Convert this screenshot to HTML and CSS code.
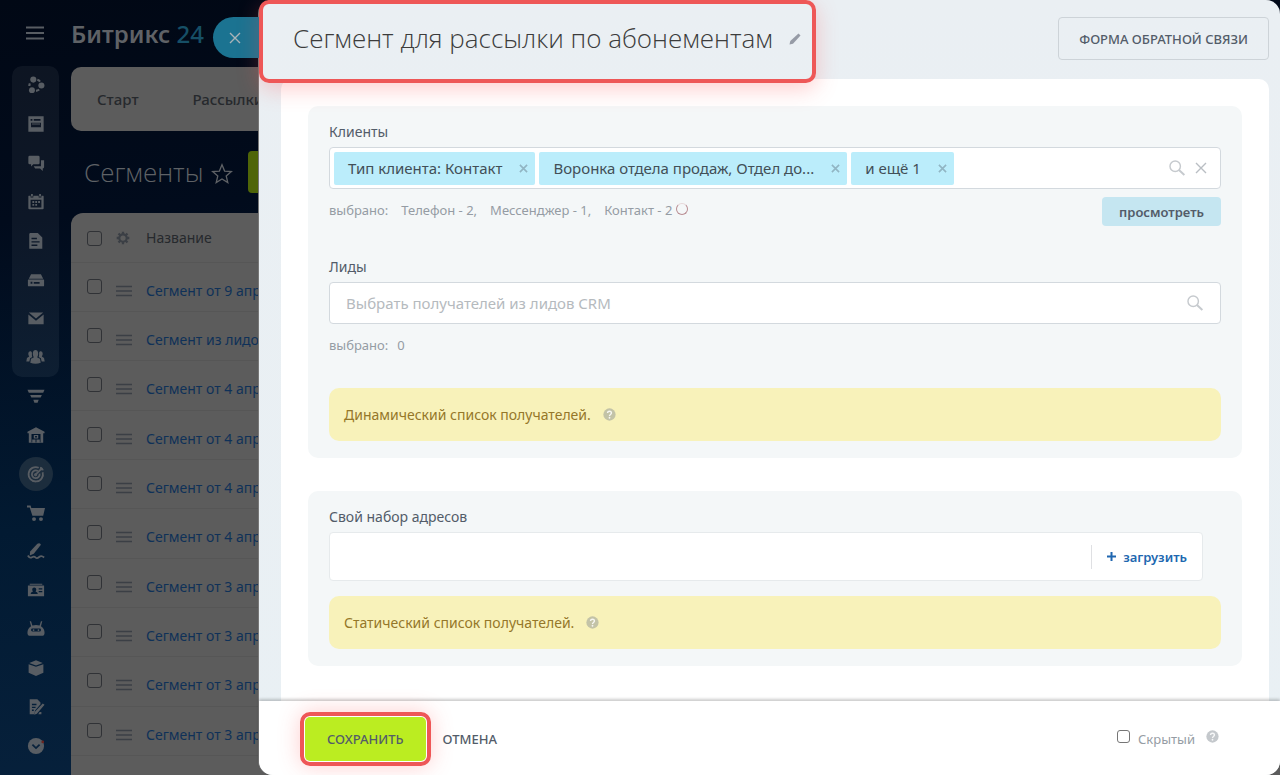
FILE: index.html
```html
<!DOCTYPE html>
<html lang="ru">
<head>
<meta charset="utf-8">
<meta name="viewport" content="width=device-width, initial-scale=1">
<title>Сегмент для рассылки по абонементам</title>
<link rel="stylesheet" href="styles.css">
</head>
<body>
<svg class="sprite" aria-hidden="true">
  <symbol id="search" viewBox="0 0 20 20"><circle cx="8" cy="8" r="5.8" fill="none" stroke="currentColor" stroke-width="1.6"/><path d="M12.2 12.2l6 5.600" stroke="currentColor" stroke-width="2.2"/></symbol>
  <symbol id="cross" viewBox="0 0 12 12"><path d="M1 1l10 10M11 1L1 11" stroke="currentColor" stroke-width="1.4" fill="none"/></symbol>
  <symbol id="small-cross" viewBox="0 0 10 10"><path d="M1 1l8 8M9 1L1 9" stroke="currentColor" stroke-width="1.8" fill="none"/></symbol>
  <symbol id="help" viewBox="0 0 14 14"><circle cx="7" cy="7" r="6.6" fill="currentColor"/><path d="M4.9 5.5c0-2.6 4.2-2.6 4.2 0 0 1.500-2.100 1.500-2.100 3" fill="none" stroke="#fff" stroke-opacity=".85" stroke-width="1.5"/><circle cx="7" cy="10.500" r=".95" fill="#fff" fill-opacity=".85"/></symbol>
  <symbol id="drag" viewBox="0 0 16 12"><path d="M0 1.500h16M0 6h16M0 10.500h16" stroke="currentColor" stroke-width="1.6"/></symbol>
</svg>

<div class="portal">
  <aside class="sidebar">
    <button class="menu-button" aria-label="Меню"><svg width="18" height="14" viewBox="0 0 18 14"><path d="M0 1.500h18M0 7h18M0 12.500h18" stroke="currentColor" stroke-width="2"/></svg></button>
    <nav class="side-nav">
      <div class="side-group">
        <a href="#" aria-label="Группы"><svg viewBox="0 0 20 20"><circle cx="7" cy="4" r="3.400"/><circle cx="16" cy="10.500" r="3.400"/><circle cx="5.500" cy="15.700" r="3.300"/><path d="M11.500 4.200a6.500 6.500 0 0 1 3 2M10 16.500a6.500 6.500 0 0 0 3.500-1.500M3.200 8.200a7 7 0 0 0-.6 2.800" fill="none" stroke="currentColor" stroke-width="2.400"/></svg></a>
        <a href="#" aria-label="Лента"><svg viewBox="0 0 20 20"><path fill-rule="evenodd" d="M1.500 1.500h17v17h-17zM4 4.500v2h2v-2zm3.500 0v2H15v-2zM4.500 8.500v5h11v-5z"/><path d="M5.500 9.500h9v1h-9z"/></svg></a>
        <a href="#" aria-label="Чат"><svg viewBox="0 0 20 20"><path d="M3 2h9.500q1.500 0 1.500 1.500V10q0 1.500-1.500 1.500H7L4.500 14v-2.500H3Q1.500 11.500 1.500 10V3.500Q1.500 2 3 2zM15.500 7H19v7.500q0 1.500-1.500 1.500v3L14.500 16H9l-1.500-2.500h8z"/></svg></a>
        <a href="#" aria-label="Календарь"><svg viewBox="0 0 20 20"><path fill-rule="evenodd" d="M2 3h2v2h3V3h6v2h3V3h2q.5 0 .5 1v13q0 1-1 1h-15q-1 0-1-1V4q0-1 .5-1zM4 7.500V16h12V7.500z"/><path d="M4.500 1h2v3h-2zm9 0h2v3h-2zM6 9h2v2H6zm3.200 0h2v2h-2zm3.200 0h2v2h-2zM6 12.300h2v2H6zm3.200 0h2v2h-2z"/></svg></a>
        <a href="#" aria-label="Документы"><svg viewBox="0 0 20 20"><path fill-rule="evenodd" d="M3.500 1H12l5 5v12.500H2.500V2zM5 6.500V8h6V6.500zm0 3.700v1.600h9v-1.600zm0 3.700v1.600h6.500v-1.600z"/></svg></a>
        <a href="#" aria-label="Диск"><svg viewBox="0 0 20 20"><path fill-rule="evenodd" d="M4.500 3.500h11L18 8.500H2zM1.500 9.500h17q.5 0 .5.500v6q0 1-1 1H2q-1 0-1-1v-6zM4 12v2.300h2V12zm3.500.2v2H14v-2z"/></svg></a>
        <a href="#" aria-label="Почта"><svg viewBox="0 0 20 20"><path d="M2 4h16l-8 6.500zM1.500 6l8.500 7 8.500-7v11h-17z"/></svg></a>
        <a href="#" aria-label="Сотрудники"><svg class="wide" viewBox="0 0 22 20"><path d="M8 6c0-5 6-5 6 0 0 2.500-1 3.500-1 4.500l3 1.500.8 4.500q-5.800 2-11.600 0L6 12l3-1.500C9 9.500 8 8.500 8 6zM3 6.500c0-3.500 4-3.500 4-1 0 3 0 3.500.5 4.500L5 11.500 4.200 15H.8l.7-4L4 9.500C3.500 8.500 3 8 3 6.500zM19 6.500c0-3.500-4-3.500-4-1 0 3 0 3.500-.5 4.500l2.500 1.500.8 3.500h3.400l-.7-4L18 9.500c.5-1 1-1.500 1-3z"/></svg></a>
      </div>
      <div class="side-rest">
        <a href="#" aria-label="CRM"><svg viewBox="0 0 20 20"><path d="M.5 3h19L18 6.300H2zM3.500 9h13l-1.300 2.800H4.800zM7 14.300h6l-1.200 3.200H8.200z"/></svg></a>
        <a href="#" aria-label="Склад"><svg viewBox="0 0 20 20"><path fill-rule="evenodd" d="M10 1.500l9.500 5V8H18v10.500H2V8H.5V6.500zM5 9v9h10V9z"/><path fill-rule="evenodd" d="M7.500 10h5v4h-5zm1.500 1.200v1.500h2v-1.500zM5.800 15h3.700v3.500H5.800zm4.700 0h3.700v3.500h-3.700z"/></svg></a>
        <a href="#" class="current" aria-label="Маркетинг"><svg viewBox="0 0 20 20" fill="none" stroke="currentColor"><path d="M13 3a8 8 0 1 0 4.400 5M12 6.700a4.300 4.300 0 1 0 2 3" stroke-width="2"/><path d="M9.500 10.800l7-7" stroke-width="2"/><path d="M14.500 5.500V2.500L17 .8l.5 2.200 2.200.5L18 6z" fill="currentColor" stroke="none"/><circle cx="9.500" cy="10.800" r="1.300" fill="currentColor"/></svg></a>
        <a href="#" aria-label="Магазин"><svg viewBox="0 0 20 20"><path d="M0 1.800h4L4.800 4.500H20L18 13H6L3 3.800H0z"/><circle cx="7.800" cy="16.800" r="2.200"/><circle cx="15.500" cy="16.800" r="2.200"/></svg></a>
        <a href="#" aria-label="Подпись"><svg viewBox="0 0 20 20"><path d="M11.500 2q2.500-1.500 4 1L7.500 13 3 15l.5-4.500z"/><path d="M1 15q2 3.500 4.500 2t4 .2 4-.5 5.500.5" fill="none" stroke="currentColor" stroke-width="2"/></svg></a>
        <a href="#" aria-label="Контакты"><svg viewBox="0 0 20 20"><path fill-rule="evenodd" d="M3 3h14v1.200H3zM1 5h18v12H1zM4 14.500h8q0-2-2.500-2.800.8-1 .8-2.200c0-3-4.500-3-4.500 0q0 1.200.8 2.200Q4 12.500 4 14.500zM13 8v1.500h4V8zm0 3v1.500h4V11z"/></svg></a>
        <a href="#" aria-label="Роботы"><svg viewBox="0 0 20 20"><path fill-rule="evenodd" d="M3 1.500h1.500L6 6.200q4-1.400 8 0l1.500-4.700H17L15.500 7Q19.500 9.500 19.500 14q0 3.500-2 3.500h-15q-2 0-2-3.500 0-4.500 4-7zM6 9.500q-1.500 0-1.500 1.500T6 12.800h8q1.500 0 1.500-1.800T14 9.500z"/><circle cx="7.300" cy="11.200" r="1"/><circle cx="12.700" cy="11.200" r="1"/></svg></a>
        <a href="#" aria-label="Маркет"><svg viewBox="0 0 20 20"><path d="M10 1.500l7.500 3L10 7.200 2.500 4.500zM1.800 5.800L10 8.700l8.200-2.900v9.500L10 18.800l-8.200-3.500z"/></svg></a>
        <a href="#" aria-label="Договоры"><svg viewBox="0 0 20 20"><path fill-rule="evenodd" d="M3 1.500h8.500L15 5v2l-6 7-.8 4H3zM5.500 6.500V8h5V6.500zm0 3.200v1.500h4V9.700zm0 3.200v1.500h2v-1.500z"/><path d="M17.500 6l2 1.500-8.500 10-3 1 .8-3.200zM14 15.500h2V18h-3.500z"/></svg></a>
        <a href="#" aria-label="Ещё"><svg viewBox="0 0 20 20"><circle cx="10" cy="10" r="9"/><path d="M6 8.500l4 3.800 4-3.800" fill="none" stroke="#08213b" stroke-width="2"/><circle cx="17.500" cy="5.500" r="1.500" fill="#6b2420"/></svg></a>
      </div>
    </nav>
  </aside>

  <main class="workspace">
    <header class="brand">Битрикс <span>24</span></header>
    <nav class="tabs"><a href="#">Старт</a><a href="#">Рассылки</a></nav>
    <div class="list-head">
      <h2>Сегменты</h2>
      <svg class="star" viewBox="0 0 22 22"><path d="M11 1.800l2.600 6.300 6.800.5-5.200 4.400 1.600 6.600-5.800-3.600-5.800 3.600 1.600-6.600L1.600 8.600l6.800-.5z" fill="none" stroke="currentColor" stroke-width="1.300"/></svg>
      <button class="add-button" aria-label="Добавить"></button>
    </div>
    <div class="list-card">
      <table>
        <thead><tr><th><input type="checkbox" aria-label="Выбрать все"></th><th><svg class="gear" viewBox="0 0 16 16" fill="none" stroke="currentColor"><circle cx="8" cy="8" r="4.200" stroke-width="2.400"/><path d="M8 .8v2.700M8 12.500v2.700M.8 8h2.700M12.500 8h2.700M2.900 2.900l1.900 1.900M11.200 11.200l1.900 1.900M13.100 2.900l-1.900 1.900M4.800 11.200l-1.900 1.900" stroke-width="2.600"/></svg></th><th>Название</th></tr></thead>
        <tbody>
          <tr><td><input type="checkbox" aria-label="Выбрать"></td><td><svg class="drag"><use href="#drag"/></svg></td><td><a href="#">Сегмент от 9 апреля</a></td></tr>
          <tr><td><input type="checkbox" aria-label="Выбрать"></td><td><svg class="drag"><use href="#drag"/></svg></td><td><a href="#">Сегмент из лидов</a></td></tr>
          <tr><td><input type="checkbox" aria-label="Выбрать"></td><td><svg class="drag"><use href="#drag"/></svg></td><td><a href="#">Сегмент от 4 апреля</a></td></tr>
          <tr><td><input type="checkbox" aria-label="Выбрать"></td><td><svg class="drag"><use href="#drag"/></svg></td><td><a href="#">Сегмент от 4 апреля</a></td></tr>
          <tr><td><input type="checkbox" aria-label="Выбрать"></td><td><svg class="drag"><use href="#drag"/></svg></td><td><a href="#">Сегмент от 4 апреля</a></td></tr>
          <tr><td><input type="checkbox" aria-label="Выбрать"></td><td><svg class="drag"><use href="#drag"/></svg></td><td><a href="#">Сегмент от 4 апреля</a></td></tr>
          <tr><td><input type="checkbox" aria-label="Выбрать"></td><td><svg class="drag"><use href="#drag"/></svg></td><td><a href="#">Сегмент от 3 апреля</a></td></tr>
          <tr><td><input type="checkbox" aria-label="Выбрать"></td><td><svg class="drag"><use href="#drag"/></svg></td><td><a href="#">Сегмент от 3 апреля</a></td></tr>
          <tr><td><input type="checkbox" aria-label="Выбрать"></td><td><svg class="drag"><use href="#drag"/></svg></td><td><a href="#">Сегмент от 3 апреля</a></td></tr>
          <tr><td><input type="checkbox" aria-label="Выбрать"></td><td><svg class="drag"><use href="#drag"/></svg></td><td><a href="#">Сегмент от 3 апреля</a></td></tr>
        </tbody>
      </table>
    </div>
  </main>
</div>

<form class="slider">
  <button type="button" class="slider-close" aria-label="Закрыть"><svg width="12" height="12"><use href="#cross"/></svg></button>
  <header class="slider-head">
    <div class="title-box">
      <h1>Сегмент для рассылки по абонементам</h1>
      <button type="button" class="edit" aria-label="Изменить"><svg width="12" height="12" viewBox="0 0 12 12"><path d="M9.500.5l2 2L4 10.700.5 11.500l.8-3.500z" fill="currentColor"/></svg></button>
    </div>
    <button type="button" class="feedback">ФОРМА ОБРАТНОЙ СВЯЗИ</button>
  </header>

  <div class="sheet">
    <section class="panel">
      <label for="clients">Клиенты</label>
      <div class="field clients-field">
        <span class="token">Тип клиента: Контакт<button type="button" aria-label="Удалить"><svg width="9" height="9"><use href="#small-cross"/></svg></button></span>
        <span class="token">Воронка отдела продаж, Отдел до...<button type="button" aria-label="Удалить"><svg width="9" height="9"><use href="#small-cross"/></svg></button></span>
        <span class="token">и ещё 1<button type="button" aria-label="Удалить"><svg width="9" height="9"><use href="#small-cross"/></svg></button></span>
        <input type="text" id="clients">
        <svg class="lens"><use href="#search"/></svg>
        <button type="button" class="clear" aria-label="Очистить"><svg width="12" height="12"><use href="#cross"/></svg></button>
      </div>
      <div class="status counts">
        <span>выбрано:</span><span>Телефон - 2,</span><span>Мессенджер - 1,</span><span>Контакт - 2</span><i class="spinner"></i>
        <button type="button" class="preview">просмотреть</button>
      </div>
      <label for="leads" class="leads-label">Лиды</label>
      <div class="field">
        <input type="text" id="leads" placeholder="Выбрать получателей из лидов CRM">
        <svg class="lens"><use href="#search"/></svg>
      </div>
      <div class="status leads-status"><span>выбрано:</span><span>0</span></div>
      <div class="notice dynamic">Динамический список получателей. <svg class="help"><use href="#help"/></svg></div>
    </section>

    <section class="panel">
      <label for="addresses">Свой набор адресов</label>
      <div class="upload">
        <input type="text" id="addresses">
        <button type="button"><svg width="9" height="9" viewBox="0 0 9 9"><path d="M4.500 0v9M0 4.500h9" stroke="currentColor" stroke-width="2"/></svg>загрузить</button>
      </div>
      <div class="notice">Статический список получателей. <svg class="help"><use href="#help"/></svg></div>
    </section>
  </div>

  <footer class="actions">
    <span class="save-ring"><button type="submit" class="save">СОХРАНИТЬ</button></span>
    <button type="button" class="cancel">ОТМЕНА</button>
    <div class="hidden-option"><input type="checkbox" id="hidden"><label for="hidden">Скрытый</label><svg class="help"><use href="#help"/></svg></div>
  </footer>
</form>
</body>
</html>
```
FILE: styles.css
```css
* { box-sizing: border-box; }
body {
  margin: 0;
  height: 100vh;
  overflow: hidden;
  position: relative;
  background: #8b8b8b;
  font: 14px/20px "Noto Sans", "Open Sans", sans-serif;
  color: #535c69;
}
button { font: inherit; color: inherit; background: none; border: 0; padding: 0; cursor: pointer; }
input { font: inherit; margin: 0; }
a { text-decoration: none; color: inherit; }
svg { display: block; flex: none; }
.sprite { position: absolute; width: 0; height: 0; }
input[type="checkbox"] {
  appearance: none;
  display: block;
  width: 15px;
  height: 15px;
  border: 1px solid #303236;
  border-radius: 3px;
}

.portal {
  display: flex;
  height: 100%;
  background: linear-gradient(175deg, #010815 0%, #010b1c 25%, #021a32 60%, #08233f 100%);
}
.sidebar { width: 71px; flex: none; display: flex; flex-direction: column; color: #585d63; padding: 0 1px 10px 0; }
.menu-button { height: 66px; display: grid; place-items: center; }
.side-nav { flex: 1; display: flex; flex-direction: column; min-height: 0; }
.side-group { flex: 8; display: flex; flex-direction: column; margin: 0 11px 0 12px; border-radius: 10px; background: rgba(255, 255, 255, .05); }
.side-rest { flex: 10; display: flex; flex-direction: column; margin: 0 11px 0 12px; }
.side-nav a { flex: 1; display: grid; place-items: center; min-height: 20px; }
.side-nav svg { width: 18px; height: 18px; fill: currentColor; }
.side-nav .wide { width: 21px; }
.side-nav .current svg { width: 34px; height: 34px; padding: 8px; border-radius: 50%; background: #1c2d3d; fill: none; }

.workspace { flex: 1; min-width: 0; display: flex; flex-direction: column; }
.brand { height: 67px; flex: none; font-size: 24px; font-weight: 600; line-height: 67px; color: #5f6266; }
.brand span { color: #164f66; font-weight: 500; }
.tabs { height: 64px; flex: none; display: flex; align-items: center; gap: 54px; padding: 0 26px; border-radius: 10px; background: #5c5c5c; color: #26292d; font-size: 15px; font-weight: 500; }
.list-head { height: 82px; flex: none; display: flex; align-items: center; padding-left: 13px; color: #5f6266; }
.list-head h2 { margin: 0; font: 300 26px/40px "Open Sans", sans-serif; }
.star { width: 22px; height: 22px; margin: 4px 15px 0 8px; }
.add-button { width: 120px; height: 42px; border-radius: 4px; background: #4f6508; }
.list-card { flex: 1; border-radius: 12px 12px 0 0; background: #5c5c5c; }
table { border-collapse: collapse; width: 100%; }
th, td { padding: 0; text-align: left; height: 49px; border-bottom: 1px solid #565656; font-weight: 400; color: #26292d; }
th { padding-top: 2px; }
td { padding-top: 8px; }
tr:nth-child(3n) td { height: 50px; }
th:nth-child(-n+2), td:nth-child(-n+2) { padding-left: 16px; width: 45px; }
th:nth-child(2), td:nth-child(2) { padding-left: 0; width: 30px; }
td:first-child { padding-bottom: 9px; }
td a { color: #0f3158; }
.gear { width: 14px; height: 14px; color: #3b3f45; }
.drag { width: 16px; height: 12px; color: #3b3f45; }

.slider {
  position: absolute;
  inset: 0 0 0 259px;
  display: flex;
  flex-direction: column;
  background: linear-gradient(#eaeff3, #e9f0f4);
  border-radius: 14px;
  box-shadow: -1px 0 0 #777;
}
.slider-close { position: absolute; top: 17px; left: -46px; width: 46px; height: 41px; padding-left: 16px; border-radius: 21px 0 0 21px; background: #1b7391; color: #aab4b8; }
.slider-head { height: 79px; flex: none; display: flex; align-items: flex-start; justify-content: space-between; padding-right: 11px; position: relative; z-index: 1; }
.title-box {
  height: 83px;
  display: flex;
  align-items: flex-start;
  gap: 16px;
  padding: 14px 11px 0 30px;
  border: 4px solid #ee5757;
  border-radius: 10px;
  box-shadow: 0 6px 22px rgba(255, 80, 80, .28);
}
.title-box h1 { margin: 0; font: 300 26px/40px "Open Sans", sans-serif; color: #3c3c3c; }
.edit { color: #969ba6; margin-top: 15px; }
.feedback { height: 43px; margin-top: 17px; padding: 0 20px; border: 1px solid #cdd3d8; border-radius: 4px; font-size: 13px; font-weight: 500; }

.sheet { flex: 1; min-height: 0; overflow: hidden; margin: 0 11px 0 22px; padding: 27px 27px 0; display: flex; flex-direction: column; gap: 33px; background: #fff; border-radius: 10px 10px 0 0; }
.panel { padding: 16px 21px 17px; border-radius: 10px; background: #f4f7f8; display: flex; flex-direction: column; }
.panel label { line-height: 20px; margin-bottom: 5px; }
.panel .leads-label { margin-top: 31px; }
.field { height: 42px; display: flex; align-items: center; gap: 4px; padding: 0 13px 0 4px; background: #fff; border: 1px solid #d3d9de; border-radius: 4px; font-size: 15px; }
.field input, .upload input { flex: 1; min-width: 0; height: 100%; border: 0; background: none; outline: 0; padding: 0 12px; color: #333; }
.field input::placeholder { color: #b5babe; }
.token { height: 33px; display: flex; align-items: center; gap: 17px; padding: 0 7px 0 14px; background: #bbedfb; border-radius: 2px; color: #424f57; white-space: nowrap; }
.token button { color: #91b5c3; }
.lens { width: 18px; height: 18px; color: #c6cace; }
.field .lens:last-child { margin-right: 3px; }
.clear { color: #b9bec3; margin-left: 5px; }
.status { display: flex; align-items: center; gap: 9px; min-height: 20px; margin-top: 8px; font-size: 13px; color: #959ca4; }
.counts { gap: 13px; align-items: flex-start; line-height: 27px; }
.leads-status { margin-top: 11px; }
.spinner { width: 12px; height: 12px; margin: 6px 0 0 -9px; border: 1px solid #b98d92; border-top-color: #e6d6d8; border-radius: 50%; }
.preview { margin-left: auto; height: 29px; padding: 2px 17px 0; border-radius: 4px; background: #c5e6f1; color: #535c69; font-weight: 600; }
.notice { height: 53px; display: flex; align-items: center; gap: 12px; margin-top: 15px; padding: 0 15px; border-radius: 10px; background: #f8f2ba; color: #957729; }
.dynamic { margin-top: 33px; }
.help { width: 13px; height: 13px; color: #c3c3a7; }
.upload { height: 49px; margin-right: 18px; display: flex; align-items: center; background: #fff; border: 1px solid #e6eaec; border-radius: 4px; }
.upload button { height: 24px; display: flex; align-items: center; gap: 7px; padding: 0 15px; border-left: 1px solid #dfe0e3; color: #2067b0; font-size: 13px; font-weight: 600; }

.actions { height: 74px; flex: none; display: flex; align-items: center; padding: 1px 61px 0 41px; background: #fff; border-radius: 0 0 14px 14px; box-shadow: 0 -2px 3px rgba(0, 0, 0, .2); font-size: 13px; position: relative; }
.save-ring { display: flex; padding: 1px; border: 4px solid #ee5757; border-radius: 10px; box-shadow: 0 0 22px rgba(255, 80, 80, .28); }
.save { height: 44px; padding: 0 22px; border-radius: 5px; background: #bbed21; font-weight: 500; }
.cancel { margin-left: 12px; font-weight: 500; }
.hidden-option { margin-left: auto; display: flex; align-items: center; gap: 8px; color: #959ca4; }
.hidden-option input[type="checkbox"] { width: 13px; height: 13px; border-color: #767676; margin-bottom: 4px; }
.hidden-option .help { color: #c4c8cc; margin: 0 0 4px 3px; }
```
